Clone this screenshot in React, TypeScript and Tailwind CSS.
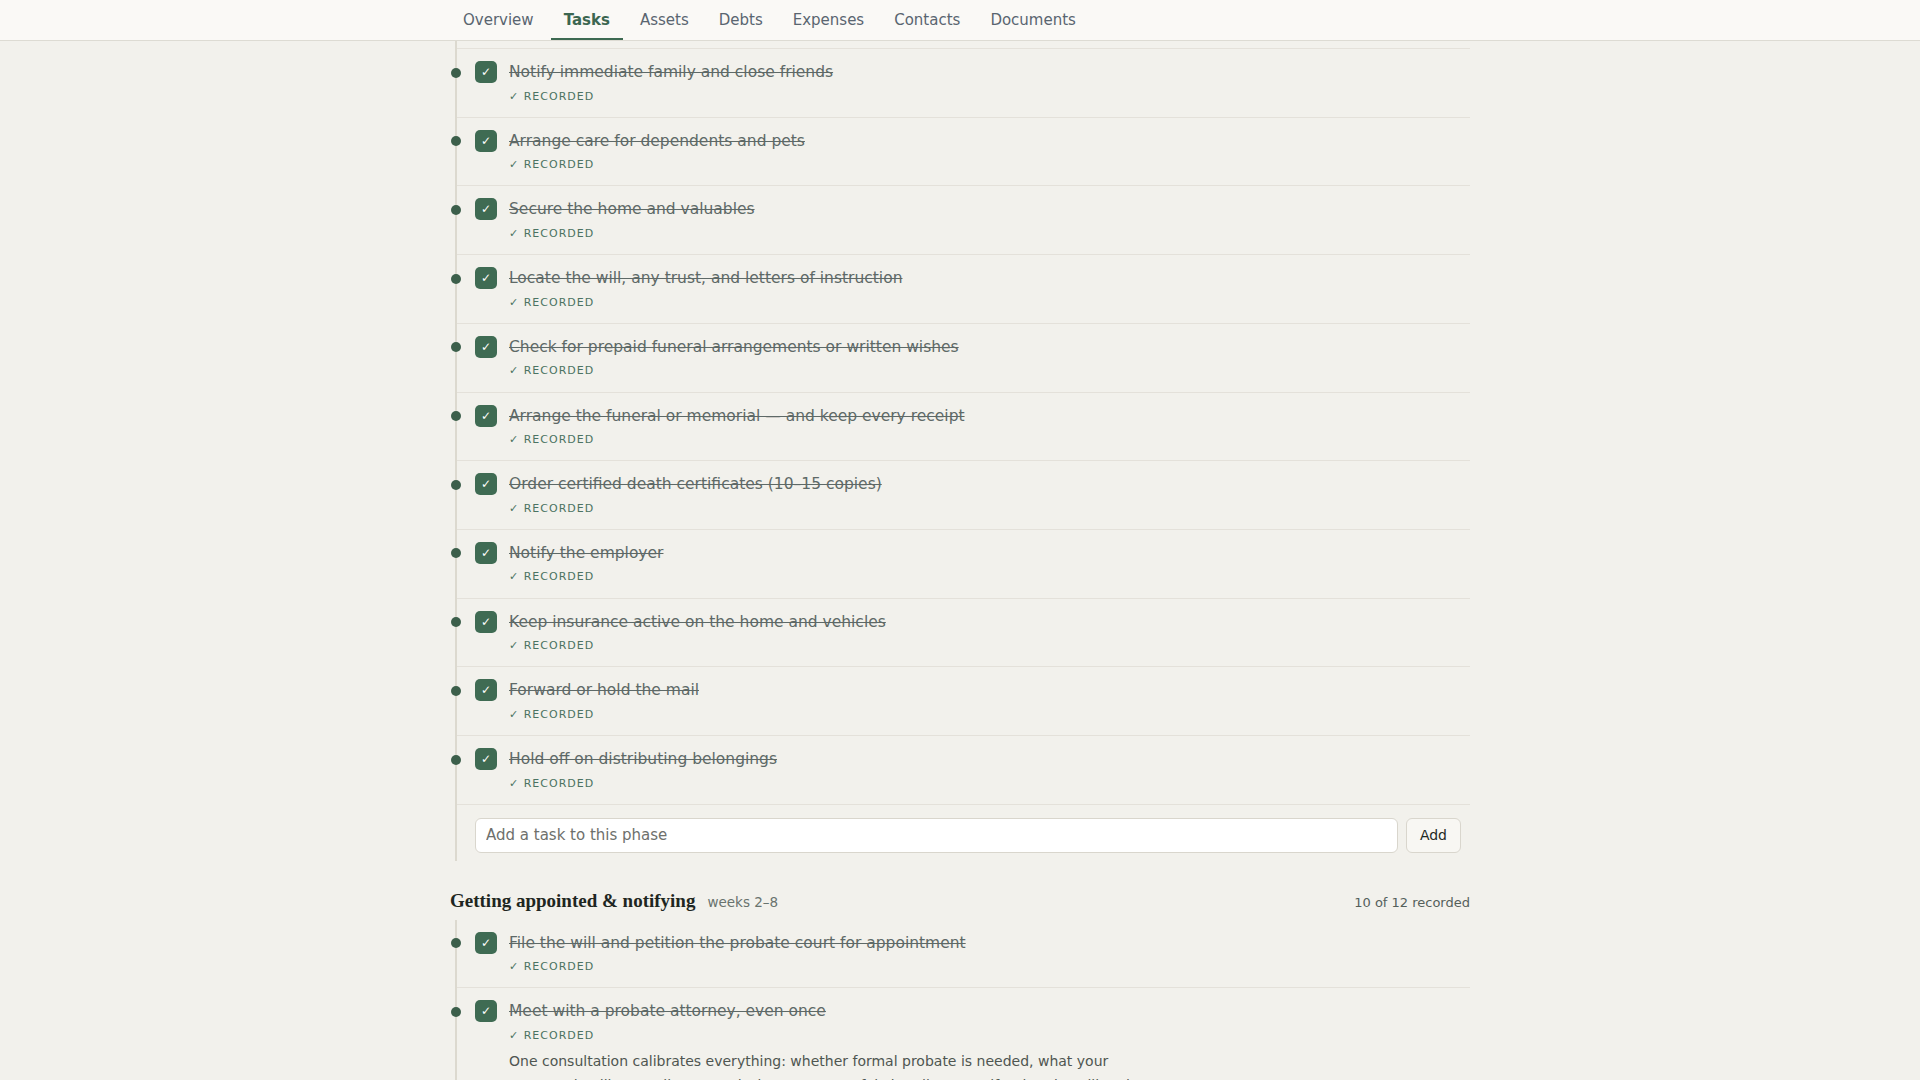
import React from 'react';

// Tabs across the top of the estate workspace
const tabs = ['Overview', 'Tasks', 'Assets', 'Debts', 'Expenses', 'Contacts', 'Documents'];

interface Task {
  title: string;
  note?: string;
}

const firstWeeks: Task[] = [
  { title: 'Notify immediate family and close friends' },
  { title: 'Arrange care for dependents and pets' },
  { title: 'Secure the home and valuables' },
  { title: 'Locate the will, any trust, and letters of instruction' },
  { title: 'Check for prepaid funeral arrangements or written wishes' },
  { title: 'Arrange the funeral or memorial \u2014 and keep every receipt' },
  { title: 'Order certified death certificates (10\u201315 copies)' },
  { title: 'Notify the employer' },
  { title: 'Keep insurance active on the home and vehicles' },
  { title: 'Forward or hold the mail' },
  { title: 'Hold off on distributing belongings' },
];

const appointing: Task[] = [
  { title: 'File the will and petition the probate court for appointment' },
  {
    title: 'Meet with a probate attorney, even once',
    note:
      "One consultation calibrates everything: whether formal probate is needed, what your estate's deadlines really are, and what you can safely handle yourself. Bring the will and the death certificate.",
  },
];

const TaskRow: React.FC<{ task: Task }> = ({ task }) => (
  <li className="relative flex items-start gap-[12px] border-b border-[#e4e1da] pb-[11.5px] pl-[18px] pt-[11px]">
    {/* timeline dot sits on the rail */}
    <span className="absolute left-[-6.5px] top-[18.5px] h-[10px] w-[10px] rounded-full bg-[#3c5f4b]" />
    <span className="mt-[1px] flex h-[22px] w-[22px] shrink-0 items-center justify-center rounded-[5px] bg-[#3f6b53] text-[12px] leading-none text-white">
      ✓
    </span>
    <div className="flex flex-col">
      <span className="text-[15.5px] leading-[24px] text-[#5e6967] line-through">{task.title}</span>
      <span className="mt-[4.5px] text-[11px] leading-[16.7px] tracking-[1px] text-[#4b7362]">✓ RECORDED</span>
      {task.note && (
        <p className="mt-[4.5px] max-w-[640px] text-[14px] leading-[24px] text-[#4f5651]">{task.note}</p>
      )}
    </div>
  </li>
);

export default function App() {
  return (
    <div className="min-h-screen bg-[#f2f1ec] font-['DejaVu_Sans',sans-serif]">
      {/* Section tabs */}
      <nav className="border-b border-[#dddbd3] bg-[#faf9f6]">
        <div className="mx-auto flex max-w-[1020px] gap-[4px]">
          {tabs.map((tab) => (
            <div
              key={tab}
              className={
                tab === 'Tasks'
                  ? 'flex h-10 items-center border-b-2 border-[#3d6a52] px-[13px] pt-[2px] text-[15px] font-bold text-[#3b6650]'
                  : 'flex h-10 items-center border-b-2 border-transparent px-[13px] pt-[2px] text-[15px] text-[#596570]'
              }
            >
              {tab}
            </div>
          ))}
        </div>
      </nav>

      <main className="mx-auto max-w-[1020px]">
        {/* First weeks phase */}
        <section>
          <ul className="ml-[5px] border-l-2 border-[#dcd9cf] pb-[8px]">
            <li className="h-[8px] border-b border-[#e4e1da]" />
            {firstWeeks.map((task) => (
              <TaskRow key={task.title} task={task} />
            ))}
            <li className="flex gap-[8px] pl-[18px] pr-[9px] pt-[13px]">
              <input
                placeholder="Add a task to this phase"
                className="h-[35px] flex-1 rounded-[6px] border border-[#d9d6cd] bg-white px-[10px] text-[15px] text-[#2a2f2c] outline-none placeholder:text-[#6e706c]"
              />
              <button className="h-[35px] rounded-[6px] border border-[#d9d6cd] bg-[#f8f7f3] px-[13px] text-[14px] text-[#1f2a24]">
                Add
              </button>
            </li>
          </ul>
        </section>

        {/* Getting appointed phase */}
        <section className="mt-[26px]">
          <div className="flex items-baseline justify-between">
            <div className="flex items-baseline gap-[12px]">
              <h2 className="font-['Liberation_Serif',serif] text-[19px] font-bold leading-[28px] text-[#1e2621]">
                Getting appointed &amp; notifying
              </h2>
              <span className="text-[13.5px] text-[#69736e]">weeks 2–8</span>
            </div>
            <span className="text-[13px] text-[#55605b]">10 of 12 recorded</span>
          </div>
          <ul className="ml-[5px] mt-[5px] border-l-2 border-[#dcd9cf]">
            {appointing.map((task) => (
              <TaskRow key={task.title} task={task} />
            ))}
          </ul>
        </section>
      </main>
    </div>
  );
}
